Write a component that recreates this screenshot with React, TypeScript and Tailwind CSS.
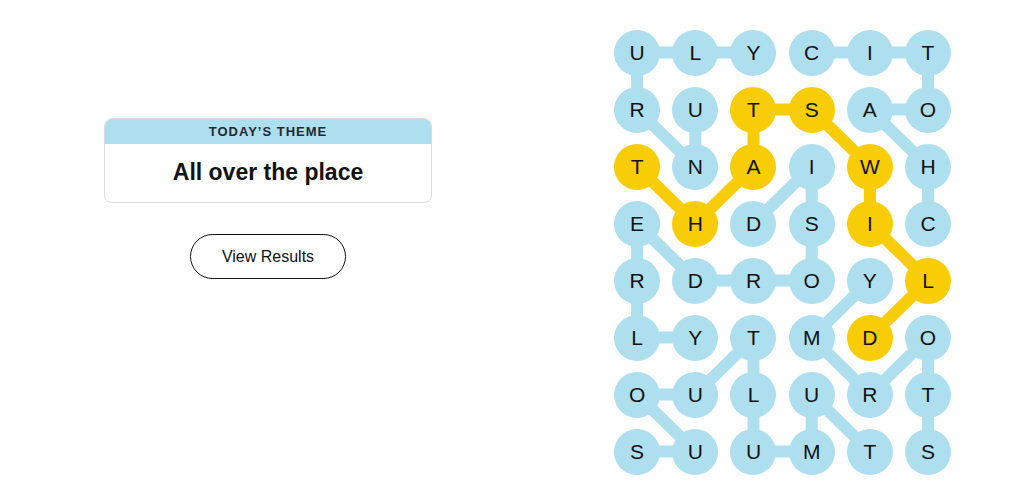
const letters = [
  'ULYCIT',
  'RUTSAO',
  'TNAIWH',
  'EHDSIC',
  'RDROYL',
  'LYTMDO',
  'OULURT',
  'SUUMTS',
]

type Cell = [number, number]

const words: { path: Cell[]; spangram?: boolean }[] = [
  { path: [[1, 1], [2, 1], [1, 0], [0, 0], [0, 1], [0, 2]] },
  { path: [[3, 5], [2, 5], [1, 4], [1, 5], [0, 5], [0, 4], [0, 3]] },
  { path: [[2, 0], [3, 1], [2, 2], [1, 2], [1, 3], [2, 4], [3, 4], [4, 5], [5, 4]], spangram: true },
  { path: [[3, 2], [2, 3], [3, 3], [4, 3], [4, 2], [4, 1], [3, 0], [4, 0], [5, 0], [5, 1]] },
  { path: [[7, 5], [6, 5], [5, 5], [6, 4], [5, 3], [4, 4]] },
  { path: [[7, 4], [6, 3], [7, 3], [7, 2], [6, 2], [5, 2], [6, 1], [6, 0], [7, 1], [7, 0]] },
]

const CW = 58.2
const RH = 57
const BLUE = '#aedfee'
const YELLOW = '#f8cd05'

const spanCells = new Set(words.filter(w => w.spangram).flatMap(w => w.path.map(([r, c]) => `${r}-${c}`)))

function Board() {
  return (
    <div className="relative w-[350px] h-[456px]">
      <svg className="absolute inset-0" width={350} height={456}>
        {words.map((w, i) =>
          w.path.slice(1).map(([r, c], j) => {
            const [pr, pc] = w.path[j]
            return (
              <line
                key={`${i}-${j}`}
                x1={pc * CW + CW / 2}
                y1={pr * RH + RH / 2}
                x2={c * CW + CW / 2}
                y2={r * RH + RH / 2}
                stroke={w.spangram ? YELLOW : BLUE}
                strokeWidth={12}
              />
            )
          })
        )}
      </svg>
      <div className="relative grid grid-cols-[repeat(6,58.2px)] grid-rows-[repeat(8,57px)]">
        {letters.flatMap((row, r) =>
          row.split('').map((ch, c) => (
            <div key={`${r}-${c}`} className="flex items-center justify-center">
              <div
                className={
                  spanCells.has(`${r}-${c}`)
                    ? 'w-[46px] h-[46px] rounded-full bg-[#f8cd05] flex items-center justify-center text-[21px] text-[#121212]'
                    : 'w-[46px] h-[46px] rounded-full bg-[#aedfee] flex items-center justify-center text-[21px] text-[#121212]'
                }
              >
                {ch}
              </div>
            </div>
          ))
        )}
      </div>
    </div>
  )
}

export default function App() {
  return (
    <div className="w-[1024px] h-[497px] bg-white flex font-['Liberation_Sans',Arial,sans-serif] text-[#121212]">
      <div className="w-[536px] flex flex-col items-center pt-[118px]">
        <div className="w-[328px] rounded-[8px] border border-[#dcdcdc] overflow-hidden">
          <div className="h-[25px] bg-[#aedfee] flex items-center justify-center text-[13px] font-bold tracking-[1px] text-[#1f2a30]">
            TODAY’S THEME
          </div>
          <div className="h-[58px] flex items-center justify-center text-[23px] font-bold pb-[2px]">
            All over the place
          </div>
        </div>
        <button className="mt-[31px] w-[156px] h-[45px] rounded-full border border-[#121212] text-[16px] text-[#121212] bg-white">
          View Results
        </button>
      </div>
      <div className="pl-[72px] pt-[24px]">
        <Board />
      </div>
    </div>
  )
}
